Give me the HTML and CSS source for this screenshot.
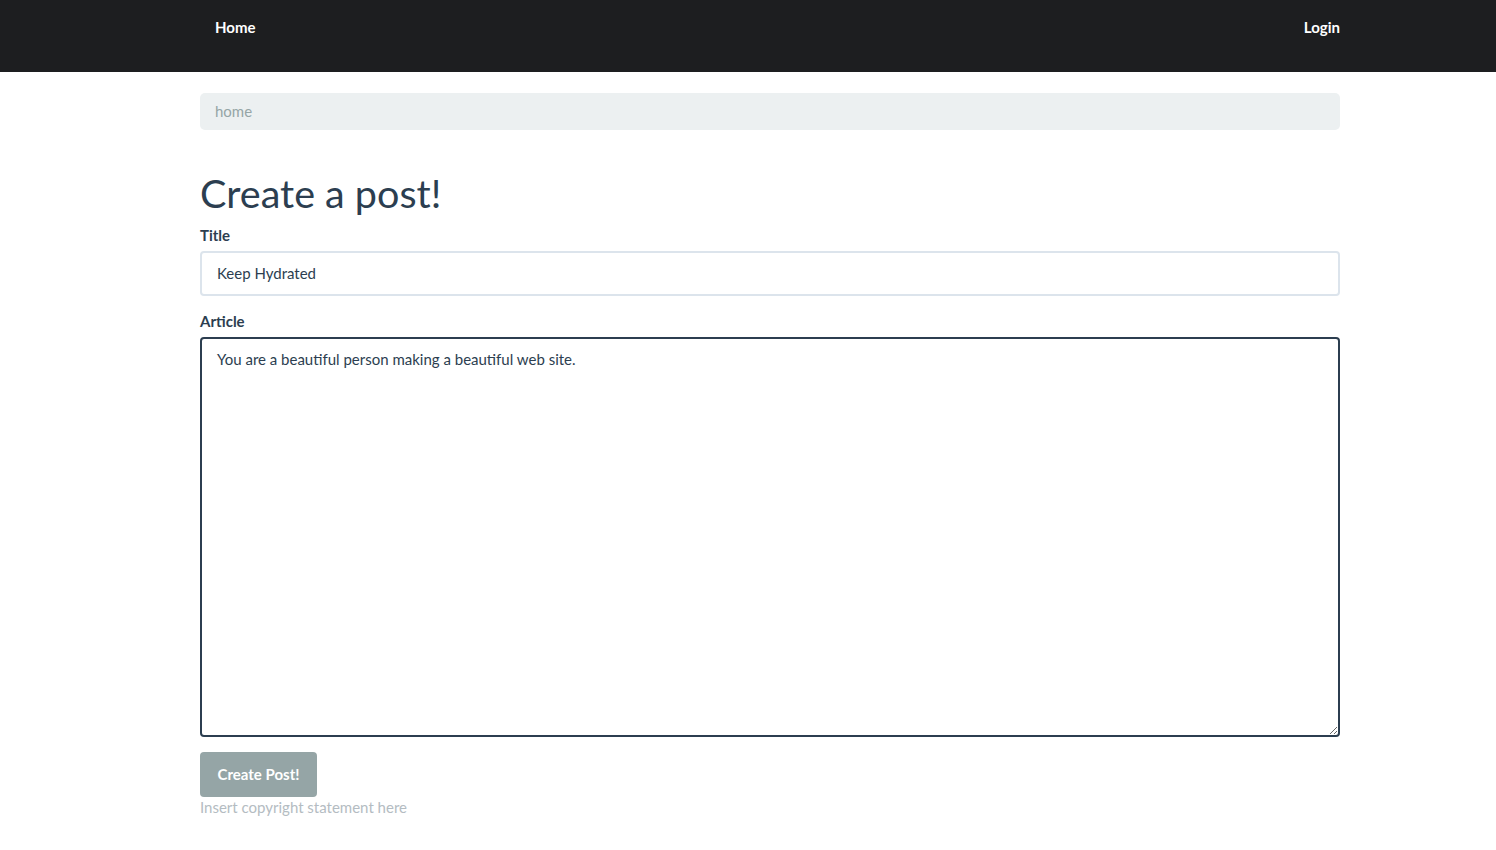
FILE: index.html
```html
<!DOCTYPE html>
<html lang="en">
<head>
<meta charset="utf-8">
<title>Create a post</title>
<link rel="stylesheet" href="styles.css">
</head>
<body>
<nav class="navbar">
  <div class="container nav-inner">
    <a class="nav-link" href="#">Home</a>
    <a class="nav-link" href="#">Login</a>
  </div>
</nav>
<main class="container">
  <div class="breadcrumb">home</div>
  <h1 class="page-title">Create a post!</h1>
  <form class="post-form">
    <label class="form-label" for="title">Title</label>
    <input class="form-control" id="title" type="text" value="Keep Hydrated">
    <label class="form-label label-article" for="article">Article</label>
    <textarea class="form-control textarea focused" id="article">You are a beautiful person making a beautiful web site.</textarea>
    <button class="btn" type="button">Create Post!</button>
  </form>
  <footer class="footer">Insert copyright statement here</footer>
</main>
</body>
</html>
```
FILE: styles.css
```css
* { box-sizing: border-box; }
html, body { margin: 0; }
body {
  font-family: Lato, "Noto Sans", "Liberation Sans", sans-serif;
  font-size: 15px;
  line-height: 1.5;
  color: #212529;
  background: #fff;
}
.container {
  width: 1140px;
  margin: 0 0 0 200px;
}
.navbar {
  background: #1d1e20;
  height: 72px;
}
.nav-inner {
  display: flex;
  justify-content: space-between;
  padding-top: 16px;
}
.nav-link {
  color: #fff;
  text-decoration: none;
  font-weight: 700;
  padding: 0 0 0 15px;
}
.breadcrumb {
  margin-top: 21px;
  background: #ecf0f1;
  color: #95a5a6;
  border-radius: 5px;
  padding: 7px 15px;
  height: 37px;
}
.page-title {
  color: #2c3e50;
  font-size: 39.5px;
  font-weight: 400;
  line-height: 48px;
  margin: 39px 0 7px;
}
.post-form {
  display: flex;
  flex-direction: column;
  align-items: flex-start;
}
.form-label {
  color: #2c3e50;
  font-weight: 700;
  margin-bottom: 4px;
}
.label-article { margin-bottom: 5px; }
.form-control {
  width: 100%;
  font-family: inherit;
  font-size: 15px;
  line-height: 1.5;
  color: #2c3e50;
  border: 2px solid #dce4ec;
  border-radius: 4px;
  padding: 9px 15px;
  height: 45px;
  margin-bottom: 14px;
  background: #fff;
  outline: none;
}
.textarea {
  height: 400px;
  resize: vertical;
  margin-bottom: 15px;
}
.textarea.focused { border-color: #2c3e50; }
.btn {
  font-family: inherit;
  font-size: 15px;
  font-weight: 700;
  color: #fff;
  background: #95a5a6;
  border: 0;
  border-radius: 4px;
  padding: 11px 17px;
  width: 117px;
  height: 45px;
  line-height: 1.5;
}
.footer {
  color: #b4bcc2;
  margin-top: -1px;
}
```
